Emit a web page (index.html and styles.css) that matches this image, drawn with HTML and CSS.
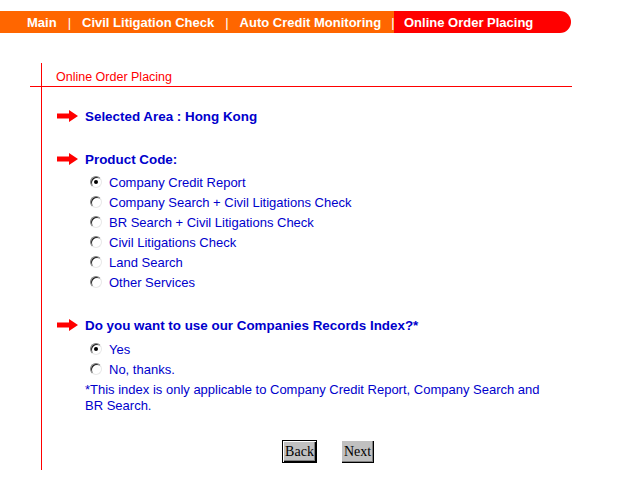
FILE: index.html
```html
<!DOCTYPE html>
<html>
<head>
<meta charset="utf-8">
<link rel="stylesheet" href="styles.css">
</head>
<body>
<nav class="nav">
  <div class="nav-main">
    <span class="nav-item">Main</span><span class="sep">|</span>
    <span class="nav-item">Civil Litigation Check</span><span class="sep">|</span>
    <span class="nav-item">Auto Credit Monitoring</span><span class="sep sep-last">|</span>
  </div>
  <div class="nav-active"><span class="nav-item">Online Order Placing</span></div>
</nav>

<div class="panel">
  <div class="panel-head">Online Order Placing</div>
  <div class="rule"></div>
  <div class="panel-body">
    <div class="q">
      <svg class="arrow" width="21" height="12" viewBox="0 0 21 12"><path d="M0 3.5H12V0L21 6L12 12V8.5H0Z" fill="#f00"/></svg>
      <span>Selected Area : Hong Kong</span>
    </div>

    <div class="q q-gap">
      <svg class="arrow" width="21" height="12" viewBox="0 0 21 12"><path d="M0 3.5H12V0L21 6L12 12V8.5H0Z" fill="#f00"/></svg>
      <span>Product Code:</span>
    </div>
    <ul class="options">
      <li><span class="radio checked"></span>Company Credit Report</li>
      <li><span class="radio"></span>Company Search + Civil Litigations Check</li>
      <li><span class="radio"></span>BR Search + Civil Litigations Check</li>
      <li><span class="radio"></span>Civil Litigations Check</li>
      <li><span class="radio"></span>Land Search</li>
      <li><span class="radio"></span>Other Services</li>
    </ul>

    <div class="q q-gap">
      <svg class="arrow" width="21" height="12" viewBox="0 0 21 12"><path d="M0 3.5H12V0L21 6L12 12V8.5H0Z" fill="#f00"/></svg>
      <span>Do you want to use our Companies Records Index?*</span>
    </div>
    <ul class="options options-yn">
      <li><span class="radio checked"></span>Yes</li>
      <li><span class="radio"></span>No, thanks.</li>
    </ul>
    <p class="note">*This index is only applicable to Company Credit Report, Company Search and BR Search.</p>

    <div class="buttons">
      <button class="btn btn-default">Back</button>
      <button class="btn">Next</button>
    </div>
  </div>
</div>
</body>
</html>
```

FILE: styles.css
```css
html, body {
  margin: 0;
  padding: 0;
  background: #fff;
}
body {
  font-family: "Liberation Sans", Arial, sans-serif;
  color: #0000cc;
}

/* top navigation */
.nav {
  margin-top: 11px;
  height: 22px;
  display: flex;
}
.nav-main {
  background: #ff6600;
  width: 367px;
  padding-left: 27px;
  display: flex;
  align-items: center;
}
.nav-active {
  background: #ff0000;
  width: 167px;
  padding-left: 10px;
  border-radius: 0 11px 11px 0;
  display: flex;
  align-items: center;
}
.nav-item {
  color: #fff;
  font-size: 13px;
  font-weight: bold;
  white-space: nowrap;
}
.sep {
  color: #fff;
  font-size: 13px;
  margin: 0 11px 0 11px;
}
.sep-last {
  margin-right: 0;
  margin-left: 10px;
}

/* panel */
.panel {
  margin: 30px 0 0 30px;
  width: 542px;
}
.panel-head {
  margin-left: 11px;
  border-left: 1px solid #f00;
  height: 23px;
  box-sizing: border-box;
  padding: 7px 0 0 14px;
  font-size: 12.5px;
  line-height: 15px;
  color: #f00;
}
.rule {
  border-top: 1px solid #f00;
}
.panel-body {
  margin-left: 11px;
  border-left: 1px solid #f00;
  padding: 19px 0 7px 15px;
}

.q {
  display: flex;
  align-items: center;
  gap: 7px;
  height: 20px;
  font-size: 13.4px;
  font-weight: bold;
}
.q-gap {
  margin-top: 23px;
}
.arrow {
  display: block;
  flex: none;
}

.options {
  list-style: none;
  margin: 3px 0 0 33px;
  padding: 0;
}
.options-yn {
  margin-top: 4px;
}
.options li {
  display: flex;
  align-items: center;
  height: 20px;
  font-size: 13px;
  gap: 7px;
}
.radio {
  width: 12px;
  height: 12px;
  box-sizing: border-box;
  border-radius: 50%;
  border: 1px solid;
  border-color: #808080 #e8e8e8 #e8e8e8 #808080;
  box-shadow: inset 1px 1px 0 #202020;
  background: #fff;
  position: relative;
  flex: none;
}
.radio.checked::after {
  content: "";
  position: absolute;
  left: 3px;
  top: 3px;
  width: 4px;
  height: 4px;
  border-radius: 50%;
  background: #000;
}

.note {
  margin: 3px 0 0 28px;
  width: 462px;
  font-size: 13px;
  line-height: 16px;
}

.buttons {
  display: flex;
  gap: 24px;
  margin-top: 26px;
  padding-left: 225px;
}
.btn {
  font-family: "Liberation Serif", "Times New Roman", serif;
  font-size: 14px;
  color: #000;
  background: #c0c0c0;
  height: 23px;
  padding: 0 3px;
  margin: 0;
  border: none;
  box-shadow: inset 1px 1px 0 #fff, inset -1px -1px 0 #000, inset -2px -2px 0 #808080;
}
.btn-default {
  border: 1px solid #000;
  padding: 0 2px;
  width: 35px;
}
```
